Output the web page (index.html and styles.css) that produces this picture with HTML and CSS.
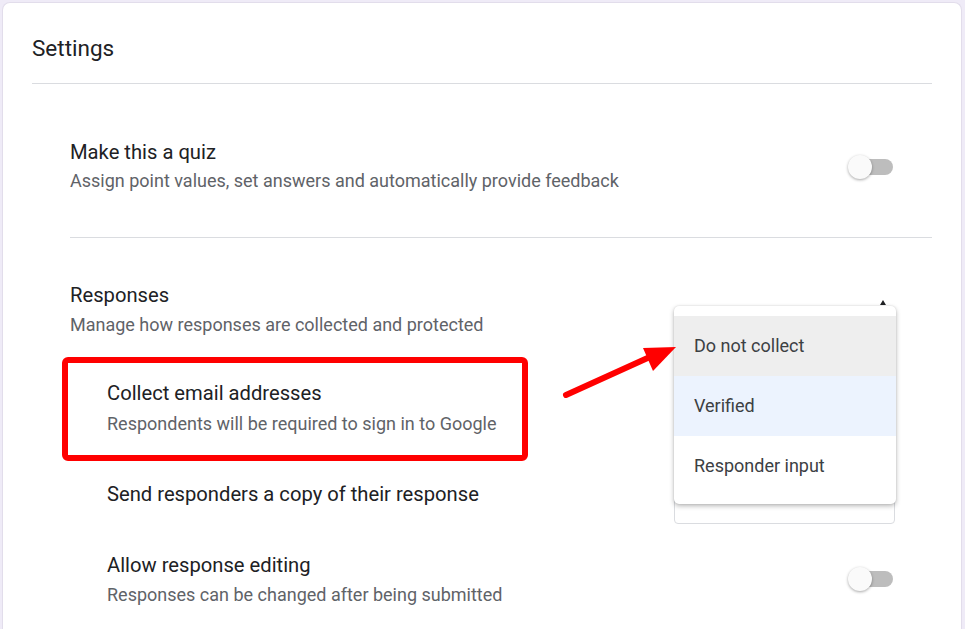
FILE: index.html
```html
<!DOCTYPE html>
<html lang="en">
<head>
<meta charset="utf-8">
<title>Settings</title>
<link rel="stylesheet" href="styles.css">
</head>
<body>
<div class="card">
  <h1 class="title">Settings</h1>

  <section class="section quiz">
    <div class="row">
      <div class="text">
        <div class="label">Make this a quiz</div>
        <div class="desc">Assign point values, set answers and automatically provide feedback</div>
      </div>
      <div class="toggle"><span class="thumb"></span><span class="track"></span></div>
    </div>
  </section>

  <section class="section responses">
    <div class="label">Responses</div>
    <div class="desc">Manage how responses are collected and protected</div>

    <div class="row sub-row collect">
      <div class="text">
        <div class="label">Collect email addresses</div>
        <div class="desc desc-loose">Respondents will be required to sign in to Google</div>
      </div>
      <div class="select"></div>
    </div>

    <div class="row sub-row send">
      <div class="text">
        <div class="label">Send responders a copy of their response</div>
      </div>
      <div class="select"></div>
    </div>

    <div class="row sub-row allow">
      <div class="text">
        <div class="label">Allow response editing</div>
        <div class="desc">Responses can be changed after being submitted</div>
      </div>
      <div class="toggle"><span class="thumb"></span><span class="track"></span></div>
    </div>
  </section>
</div>

<span class="caret"></span>
<div class="menu">
  <div class="menu-item hovered">Do not collect</div>
  <div class="menu-item selected">Verified</div>
  <div class="menu-item">Responder input</div>
</div>

<svg class="annotation" width="965" height="629" viewBox="0 0 965 629">
  <rect x="65" y="360" width="460" height="98" rx="3" fill="none" stroke="#ff0000" stroke-width="6"/>
  <line x1="566" y1="395" x2="652" y2="356" stroke="#ff0000" stroke-width="6" stroke-linecap="round"/>
  <polygon points="643,348 676,347 653,371" fill="#ff0000"/>
</svg>
</body>
</html>
```
FILE: styles.css
```css
* { box-sizing: border-box; }

html, body {
  margin: 0;
  padding: 0;
  background: #efebf7;
  height: 100%;
  overflow: hidden;
}

body {
  font-family: Roboto, "Liberation Sans", Arial, sans-serif;
  color: #202124;
}

.card {
  margin: 2px 3px 0 2px;
  background: #ffffff;
  border: 1px solid #e2ddeb;
  border-bottom: none;
  border-radius: 8px 8px 0 0;
  padding: 0 29px;
  min-height: 640px;
}

.title {
  margin: 0;
  padding: 31px 0 21px;
  font-size: 22.5px;
  line-height: 28px;
  font-weight: 400;
  color: #202124;
  border-bottom: 1px solid #dadce0;
}

.section {
  padding-left: 38px;
}

.quiz {
  padding-left: 0;
  margin-left: 38px;
  padding-top: 56px;
  padding-bottom: 44px;
  border-bottom: 1px solid #dadce0;
}

.responses {
  padding-top: 45px;
}

.row {
  display: flex;
  align-items: center;
  justify-content: space-between;
}

.text {
  display: flex;
  flex-direction: column;
}

.label {
  font-size: 20.2px;
  line-height: 24px;
  color: #202124;
}

.desc {
  margin-top: 6px;
  font-size: 18px;
  line-height: 24px;
  color: #5f6368;
}

.quiz .desc { margin-top: 5px; }
.desc-loose { margin-top: 7px; }

.sub-row {
  padding-left: 37px;
}

.collect { margin-top: 44px; }

.send {
  margin-top: 44px;
  align-items: flex-start;
}
.send .text { padding-top: 2px; }

.allow { margin-top: 29px; }
.allow .toggle { margin-top: -2px; }

.toggle {
  display: flex;
  align-items: center;
  margin-right: 39px;
  width: 45px;
  height: 24px;
}

.thumb {
  position: relative;
  z-index: 1;
  width: 24px;
  height: 24px;
  border-radius: 50%;
  background: #fafafa;
  box-shadow: 0 1px 3px rgba(0, 0, 0, 0.35);
  flex: none;
}

.track {
  width: 35px;
  height: 16px;
  margin-left: -14px;
  border-radius: 8px;
  background: #bdbdbd;
  flex: none;
}

.select {
  width: 221px;
  height: 44px;
  margin-right: 37px;
  border: 1px solid #dadce0;
  border-radius: 4px;
  flex: none;
}

.menu {
  position: absolute;
  left: 674px;
  top: 306px;
  width: 222px;
  height: 198px;
  padding: 10px 0 8px;
  background: #ffffff;
  border-radius: 5px;
  box-shadow: 0 2px 5px rgba(0, 0, 0, 0.28), 0 0 2px rgba(0, 0, 0, 0.12);
}

.menu-item {
  height: 60px;
  line-height: 60px;
  padding-left: 20px;
  font-size: 18px;
  color: #3c4043;
}

.menu-item.hovered { background: #eeeeee; }
.menu-item.selected { background: #ecf3fe; }

.caret {
  position: absolute;
  left: 880px;
  top: 300px;
  width: 0;
  height: 0;
  border-left: 3px solid transparent;
  border-right: 3px solid transparent;
  border-bottom: 5px solid #202124;
}

.annotation {
  position: absolute;
  left: 0;
  top: 0;
  pointer-events: none;
}
```
